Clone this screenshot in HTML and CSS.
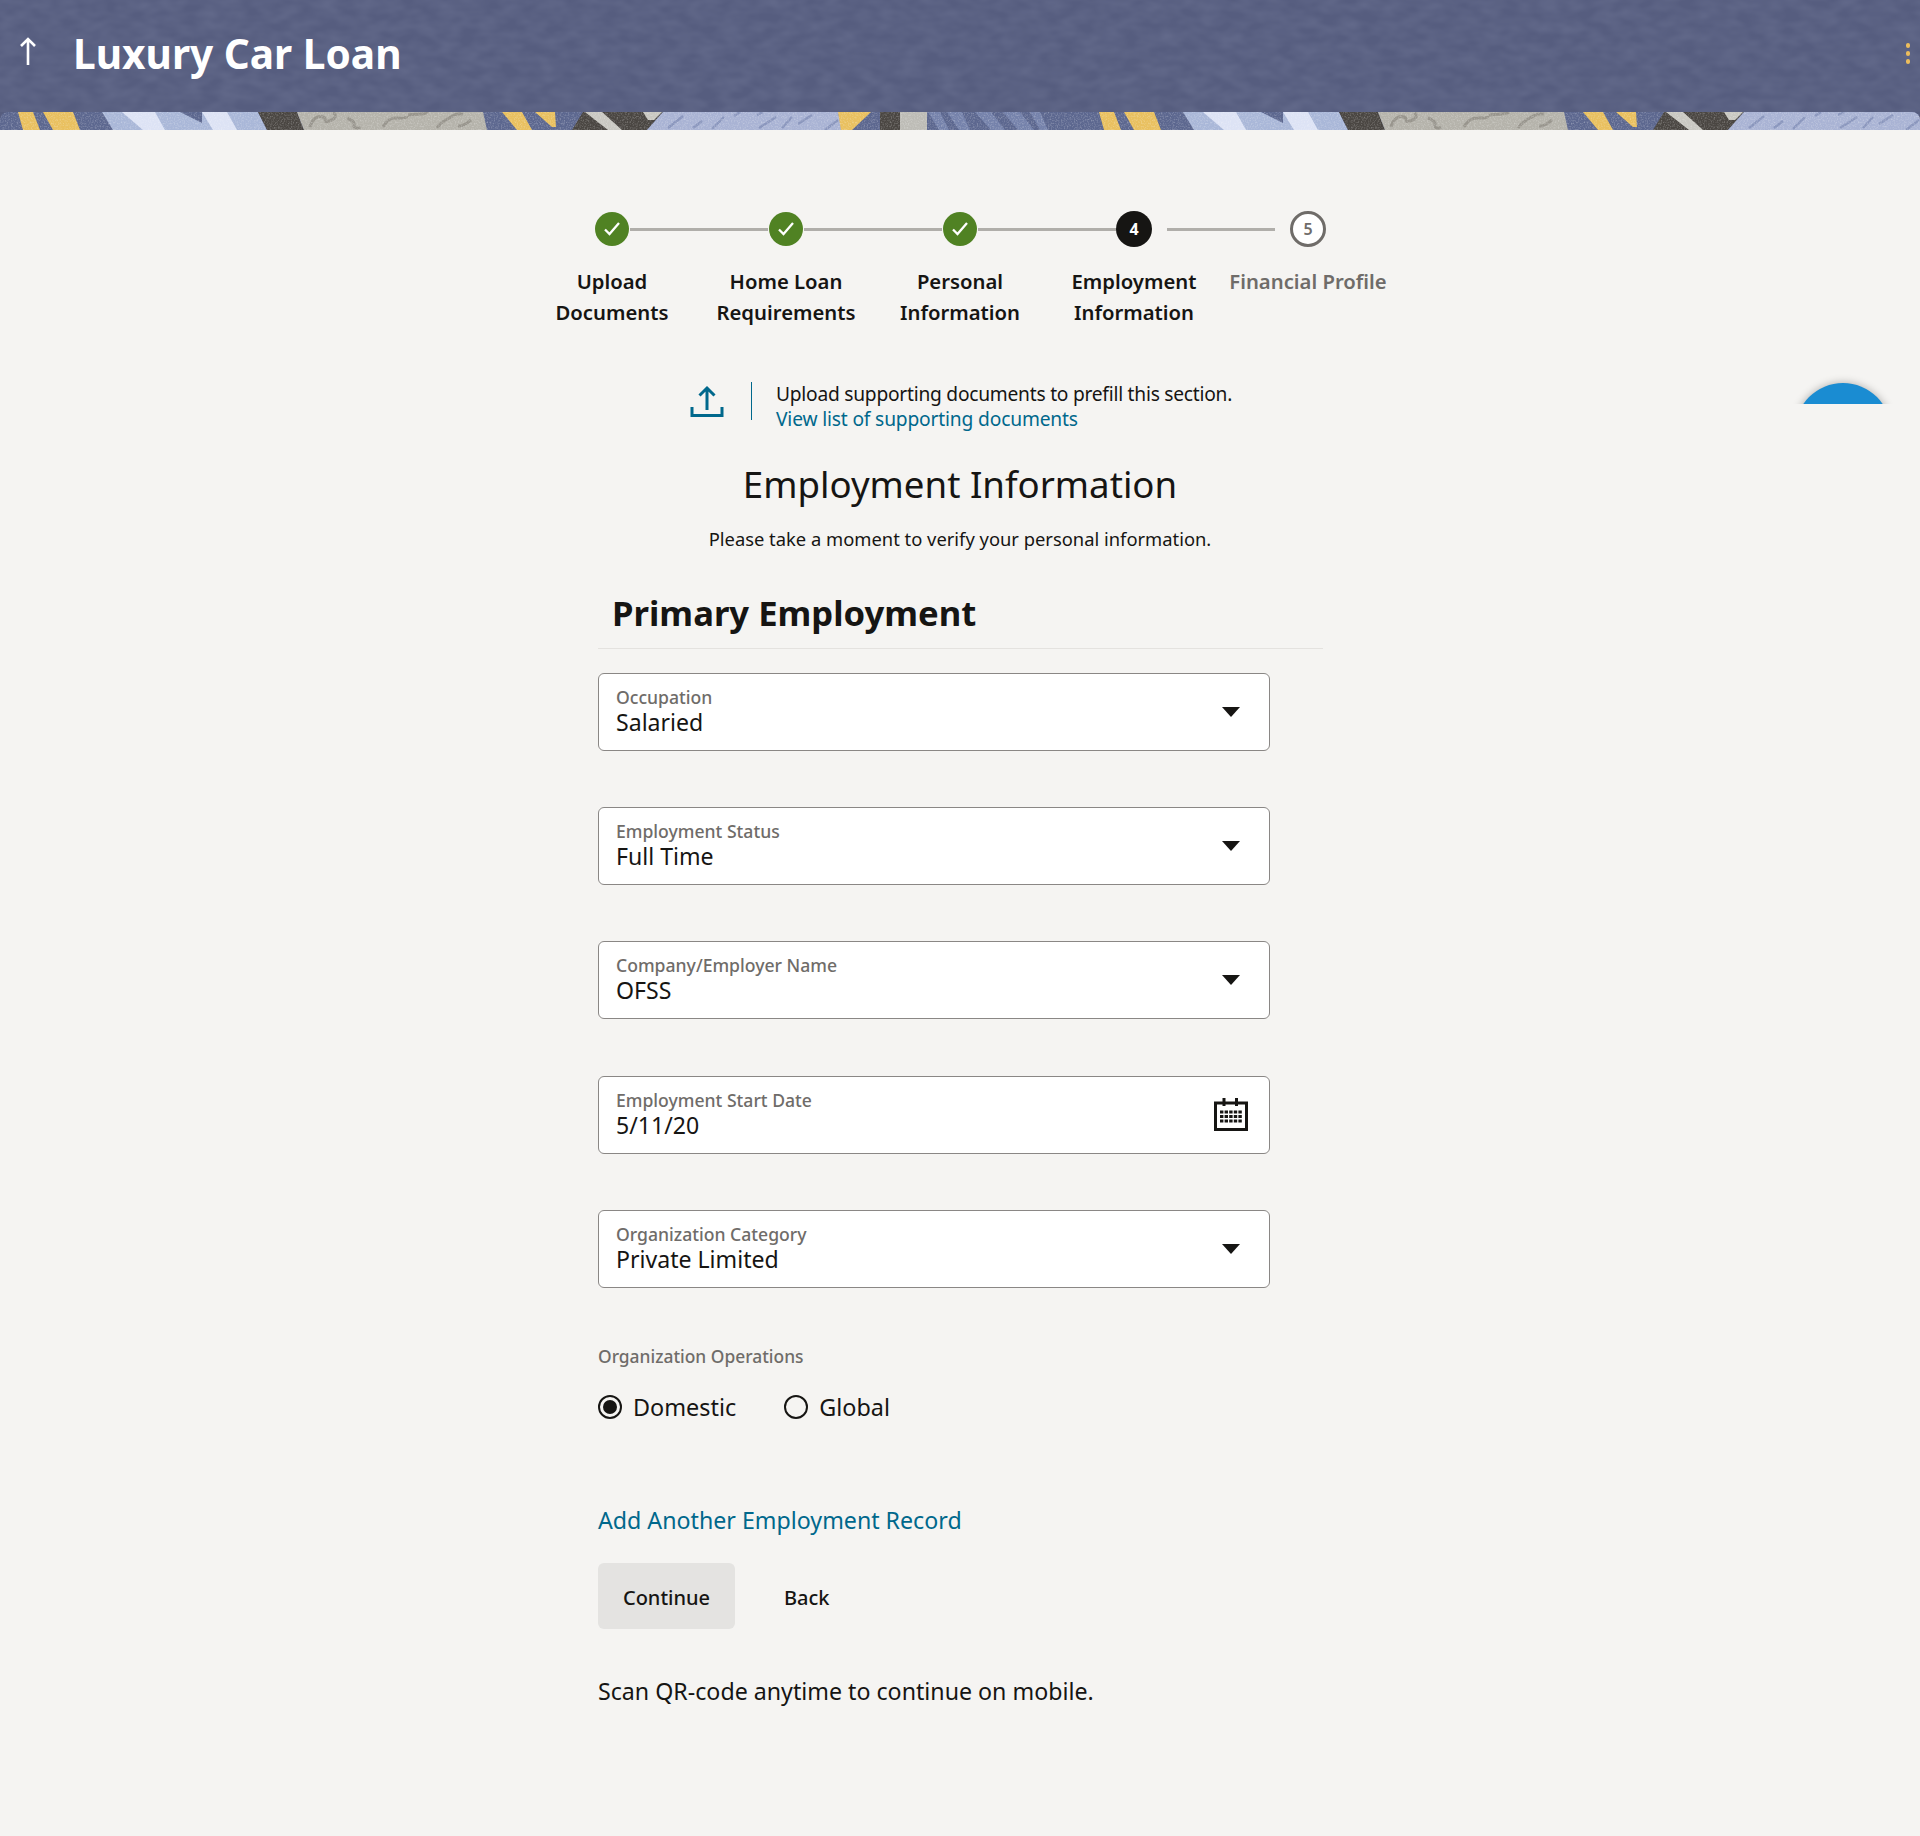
FILE: index.html
```html
<!DOCTYPE html>
<html lang="en">
<head>
<meta charset="utf-8">
<title>Luxury Car Loan</title>
<link rel="stylesheet" href="styles.css">
</head>
<body>
<header class="hero">
  <svg class="hero-texture" width="1920" height="112"><defs><filter id="swirl" x="0" y="0" width="100%" height="100%"><feTurbulence type="fractalNoise" baseFrequency="0.05 0.09" numOctaves="2" seed="7"/><feColorMatrix values="0 0 0 0 0.42  0 0 0 0 0.46  0 0 0 0 0.62  0.22 0 0 0 -0.06"/></filter></defs><rect width="1920" height="112" filter="url(#swirl)"/></svg>
  <div class="hero-bar">
    <svg class="back" width="20" height="30" viewBox="0 0 20 30"><path d="M10 29V3M3 10l7-7 7 7" fill="none" stroke="#fff" stroke-width="2.600"/></svg>
    <h1 class="hero-title">Luxury Car Loan</h1>
    <div class="kebab"><i></i><i></i><i></i></div>
  </div>
  <div class="band">
    <svg width="1920" height="18" viewBox="0 0 1920 18">
      <defs>
        <filter id="grain" x="0" y="0" width="100%" height="100%"><feTurbulence type="fractalNoise" baseFrequency="0.7" numOctaves="2" seed="3"/><feColorMatrix values="0 0 0 0 1  0 0 0 0 1  0 0 0 0 1  1.6 0 0 0 -0.7"/></filter>
        <g id="motif">
          <rect width="1081" height="18" fill="#5c678f"/>
          <path fill="#e9c05f" d="M18 0h15l7 18H23zM43 0h30l7 18H53z"/>
          <path fill="#a9b7d8" d="M102 0h156l9 18H113z"/>
          <path fill="#dde3f5" d="M122 0h33l10 18h-22zM202 0h25l10 18h-24z"/>
          <path fill="#5c678f" d="M180 0h22v11z"/>
          <path fill="#4a4642" d="M258 0h39l7 18h-37z"/>
          <path fill="#b5b3ab" d="M297 0h186l4 18H304z"/>
          <path fill="none" stroke="#98958d" stroke-width="3" d="M310 15c2-8 8-12 13-10s-1 6 6 4 8-7 4-8M347 6c5 2 8 4 7 7s4 4 6 2M383 15c4-8 9-9 14-9s10 0 10-2M408 3c8-2 14 1 20-3M437 16c4-6 8-8 12-10s6-5 14-4M458 14c5 1 9-3 13-6"/>
          <path fill="#e9c05f" d="M502 0h20l10 18h-15zM535 0h20l1 15h-4z"/>
          <path fill="#4a4642" d="M583 0h80l-16 18h-75z"/>
          <path fill="#c9c8c2" d="M585 0h17l20 18h-14zM643 0h19l-8 8h-6z"/>
          <path fill="#a9b3d4" d="M663 0h175l4 18H647z"/>
          <path fill="none" stroke="#8a96bd" stroke-width="2.400" d="M668 16l15-12M693 16l9-7M712 17l12-12M734 4l6-4M757 3l6-3M759 16l17-11M782 16l10-11M798 12l14-9M825 18l13-10"/>
          <path fill="#e9c05f" d="M838 0h33l-19 18h-11z"/>
          <path fill="#4a4642" d="M880 0h20v18h-20z"/>
          <path fill="#bdbcb6" d="M900 0h27v18h-27z"/>
          <path fill="#7582ab" d="M928 0h12l9 18h-10zM947 0h15l8 18h-11zM975 0h16l14 18h-14zM1003 0h17l14 18h-16zM1030 0h10l8 18h-8z"/>
        </g>
      </defs>
      <use href="#motif"/>
      <use href="#motif" x="1081"/>
      <rect width="1920" height="18" filter="url(#grain)" opacity=".4"/>
    </svg>
  </div>
</header>
<main class="page">
  <ol class="stepper">
    <li class="step done"><div class="track"><span class="dot"><svg width="18" height="16" viewBox="0 0 18 16"><path d="M2 8.500l4.500 4.500L16 2" fill="none" stroke="#fff" stroke-width="2.300"/></svg></span></div><div class="lbl">Upload<br>Documents</div></li>
    <li class="step done"><div class="track"><span class="dot"><svg width="18" height="16" viewBox="0 0 18 16"><path d="M2 8.500l4.500 4.500L16 2" fill="none" stroke="#fff" stroke-width="2.300"/></svg></span></div><div class="lbl">Home Loan<br>Requirements</div></li>
    <li class="step done"><div class="track"><span class="dot"><svg width="18" height="16" viewBox="0 0 18 16"><path d="M2 8.500l4.500 4.500L16 2" fill="none" stroke="#fff" stroke-width="2.300"/></svg></span></div><div class="lbl">Personal<br>Information</div></li>
    <li class="step active"><div class="track"><span class="dot">4</span></div><div class="lbl">Employment<br>Information</div></li>
    <li class="step todo"><div class="track"><span class="dot">5</span></div><div class="lbl">Financial Profile</div></li>
  </ol>
  <div class="upload">
    <svg width="34" height="34" viewBox="0 0 34 34"><path d="M17 26V4M9.500 11.500L17 4l7.500 7.500M2 23v8.500h30V23" fill="none" stroke="#00688c" stroke-width="3"/></svg>
    <span class="upload-rule"></span>
    <div class="upload-text">Upload supporting documents to prefill this section.<br><a>View list of supporting documents</a></div>
  </div>
  <h2 class="title">Employment Information</h2>
  <p class="subtitle">Please take a moment to verify your personal information.</p>
  <section class="form">
    <h3 class="section-head">Primary Employment</h3>
    <div class="field"><div><div class="f-label">Occupation</div><div class="f-value">Salaried</div></div><span class="caret"></span></div>
    <div class="field"><div><div class="f-label">Employment Status</div><div class="f-value">Full Time</div></div><span class="caret"></span></div>
    <div class="field"><div><div class="f-label">Company/Employer Name</div><div class="f-value">OFSS</div></div><span class="caret"></span></div>
    <div class="field"><div><div class="f-label">Employment Start Date</div><div class="f-value">5/11/20</div></div>
      <svg class="cal" width="34" height="33" viewBox="0 0 34 33"><path d="M1.500 5h31v26.500h-31z" fill="none" stroke="#161513" stroke-width="3"/><path d="M10 0v8M22.500 0v8" stroke="#161513" stroke-width="3"/><path d="M6 14h22M6 18.500h22M6 23h22" fill="none" stroke="#161513" stroke-width="3" stroke-dasharray="3.400 1.200"/></svg>
    </div>
    <div class="field"><div><div class="f-label">Organization Category</div><div class="f-value">Private Limited</div></div><span class="caret"></span></div>
    <div class="radio-label">Organization Operations</div>
    <div class="radios">
      <span class="radio on"><i></i>Domestic</span>
      <span class="radio"><i></i>Global</span>
    </div>
    <a class="add">Add Another Employment Record</a>
    <div class="actions"><button class="btn primary">Continue</button><button class="btn back-btn">Back</button></div>
    <p class="qr">Scan QR-code anytime to continue on mobile.</p>
  </section>
  <div class="fab"><span class="fab-disc"></span></div>
</main>
</body>
</html>
```
FILE: styles.css
```css
* { box-sizing: border-box; }
html, body { margin: 0; padding: 0; }
body { background: #f5f4f2; color: #161513; font-family: "Noto Sans", "Open Sans", sans-serif; height: 1836px; overflow: hidden; }
.hero { display: flex; flex-direction: column; background: #565d7f; height: 130px; position: relative; }
.hero-texture { position: absolute; left: 0; top: 0; }
.hero-bar { height: 112px; display: flex; align-items: center; padding: 0 10px 0 18px; color: #fff; position: relative; }
.back { margin-top: -10px; }
.hero-title { margin: -4px 0 0 35px; font-size: 40.600px; line-height: 108px; font-weight: 700; flex: 1; }
.kebab { display: flex; flex-direction: column; gap: 3px; margin-top: -6px; }
.kebab i { width: 4px; height: 5px; border-radius: 2px; background: #edbd5c; }
.band { height: 18px; border-radius: 8px 8px 0 0; overflow: hidden; position: relative; }
.band svg { display: block; }
.page { position: relative; padding-top: 81px; }
.stepper { list-style: none; margin: 0 0 0 525px; padding: 0; display: flex; width: 870px; }
.step { width: 174px; text-align: center; }
.track { height: 36px; position: relative; display: flex; justify-content: center; align-items: center; }
.track::after { content: ""; position: absolute; height: 3px; background: #b0aeaa; left: 105px; width: 138px; top: 17px; }
.active .track::after { left: 120px; width: 108px; }
.step:last-child .track::after { display: none; }
.dot { width: 34px; height: 34px; border-radius: 50%; background: #508223; display: flex; align-items: center; justify-content: center; position: relative; z-index: 1; color: #fff; font-size: 16px; font-weight: 700; }
.active .dot { width: 36px; height: 36px; background: #161513; }
.todo .dot { width: 36px; height: 36px; background: #fff; border: 3px solid #6f6c69; color: #6f6c69; font-weight: 600; }
.lbl { margin-top: 19px; font-size: 20.300px; line-height: 31px; font-weight: 600; }
.todo .lbl { color: #6f6c69; }
.upload { margin: 54px 0 0 690px; display: flex; align-items: flex-start; }
.upload svg { margin-top: 2px; }
.upload-rule { width: 1px; height: 38px; background: #00688c; margin: 0 24px 0 27px; }
.upload-text { font-size: 19.200px; letter-spacing: -0.24px; line-height: 25px; margin-top: -1px; }
.upload-text a { letter-spacing: -0.16px; }
.upload-text a, .add { color: #00688c; }
.title { margin: 27px 0 0; text-align: center; font-size: 36.650px; line-height: 52px; font-weight: 400; }
.subtitle { margin: 16px 0 0; text-align: center; font-size: 18.370px; line-height: 26px; }
.form { margin: 37px 0 0 598px; width: 725px; }
.section-head { margin: 0; padding: 0 0 11px 14px; font-size: 34.650px; line-height: 48px; font-weight: 700; border-bottom: 1px solid #e4e2df; }
.field { width: 672px; height: 78px; margin: 23.500px 0 0; background: #fff; border: 1px solid #8a8785; border-radius: 6px; padding: 12px 18px 0 17px; display: flex; justify-content: space-between; align-items: flex-start; }
.field + .field { margin-top: 56.400px; }
.f-label { font-size: 17.600px; line-height: 22px; color: #6f6c69; font-weight: 500; }
.f-value { font-size: 23.100px; line-height: 30px; margin-top: -1px; }
.caret { width: 0; height: 0; border: 9px solid transparent; border-top: 10px solid #161513; border-bottom: 0; margin: 21px 11px 0 0; }
.cal { margin: 9px 3px 0 0; }
.radio-label { margin-top: 55.900px; font-size: 17.400px; line-height: 24px; font-weight: 500; color: #6f6c69; }
.radios { display: flex; gap: 48px; margin-top: 23.500px; font-size: 23.400px; line-height: 33px; }
.radio { display: flex; align-items: center; gap: 11px; }
.radio i { width: 24px; height: 24px; border-radius: 50%; border: 2px solid #161513; display: flex; align-items: center; justify-content: center; margin-top: -2px; }
.radio.on i::after { content: ""; width: 14px; height: 14px; border-radius: 50%; background: #161513; }
.add { display: block; margin-top: 80px; font-size: 23.200px; line-height: 33px; }
.actions { display: flex; margin-top: 26px; }
.btn { border: 0; background: transparent; height: 66px; padding: 4px 24px 0; font: 500 20px/28px "Noto Sans", "Open Sans", sans-serif; color: #161513; border-radius: 6px; }
.btn.primary { background: #e4e3e1; width: 137px; padding: 4px 0 0; }
.btn.back-btn { padding-left: 49px; }
.qr { margin: 46px 0 0; font-size: 23.200px; line-height: 33px; }
.fab { position: absolute; left: 1780px; top: 240px; width: 130px; height: 34px; overflow: hidden; }
.fab-disc { position: absolute; left: 14.500px; top: 13px; width: 96px; height: 96px; border-radius: 50%; background: #1a8cd2; box-shadow: 0 0 9px rgba(0,0,0,.3); }
```
